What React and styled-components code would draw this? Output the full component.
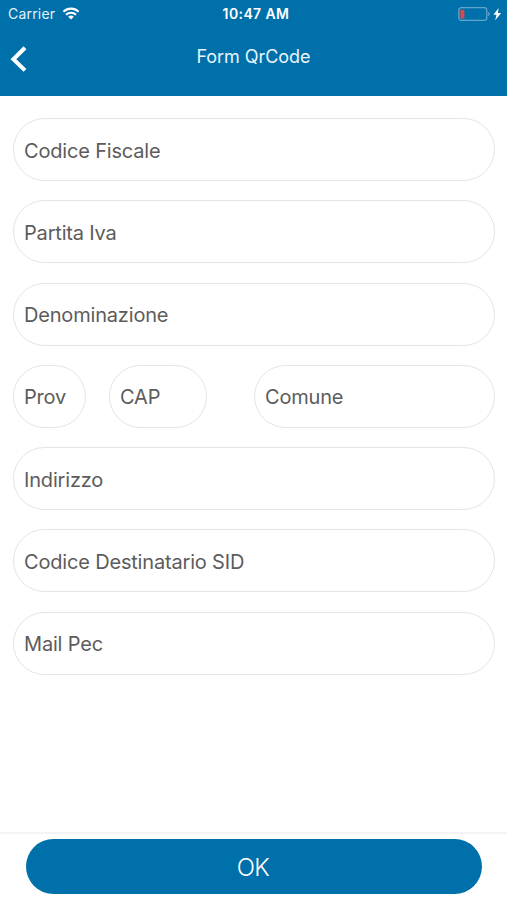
import React from "react";
import styled, { createGlobalStyle } from "styled-components";

const GlobalStyle = createGlobalStyle`
  * {
    box-sizing: border-box;
  }

  body {
    margin: 0;
    background-color: #ffffff;
    font-family: Inter, "Liberation Sans", sans-serif;
  }
`;

const Screen = styled.div`
  display: flex;
  flex-direction: column;
  width: 100%;
  height: 100vh;
  overflow: hidden;
`;

const Header = styled.header`
  height: 96px;
  flex: none;
  background-color: #0070ab;
  color: #ffffff;
`;

const StatusBar = styled.div`
  display: grid;
  grid-template-columns: 1fr auto 1fr;
  align-items: center;
  height: 27px;
  padding: 0 4px 0 8px;
  font-size: 14px;
  line-height: 27px;

  .carrier {
    display: flex;
    align-items: center;
    gap: 7px;
    color: #e4f2fa;
    letter-spacing: 0.2px;
  }

  .time {
    padding-left: 1px;
    font-size: 14px;
    font-weight: 600;
    letter-spacing: 0.4px;
  }

  .battery {
    display: flex;
    align-items: center;
    justify-content: flex-end;
  }
`;

const NavBar = styled.div`
  display: grid;
  grid-template-columns: 40px 1fr 40px;
  height: 64px;

  button {
    display: flex;
    align-items: center;
    padding: 0 0 0 10px;
    border: 0;
    background: none;
    color: inherit;
  }

  h1 {
    margin: 0;
    font-size: 18px;
    font-weight: 400;
    line-height: 59px;
    letter-spacing: -0.05px;
    text-align: center;
    color: #e9f5fb;
  }
`;

const Form = styled.form`
  display: flex;
  flex-direction: column;
  flex: 1;
  gap: 19.3px;
  padding: 22px 12px 0 13px;
`;

const FieldRow = styled.div`
  display: flex;

  > :nth-child(2) {
    margin-left: 23px;
  }

  > :nth-child(3) {
    margin-left: 47px;
  }
`;

const Field = styled.div`
  display: flex;
  align-items: center;
  flex: ${(props) => (props.$width ? "none" : "1")};
  width: ${(props) => (props.$width ? `${props.$width}px` : "auto")};
  height: 63px;
  padding: 2px 10px 0;
  border: 1px solid #e4e4e4;
  border-radius: 32px;
  font-size: 20px;
  letter-spacing: -0.18px;
  color: #5c5c5c;
  white-space: nowrap;
`;

const Footer = styled.footer`
  height: 68px;
  flex: none;
  padding: 5px 25px 0 26px;
  border-top: 2px solid #f5f4f5;
`;

const OkButton = styled.button`
  display: block;
  width: 100%;
  height: 55px;
  padding: 2px 2px 0 0;
  border: 0;
  border-radius: 28px;
  background-color: #0070ab;
  color: #ffffff;
  font-family: inherit;
  font-size: 24px;
  font-weight: 300;
  letter-spacing: -0.5px;
`;

const WifiIcon = () => (
  <svg width="18" height="13" viewBox="0 0 18 13" fill="none">
    <path d="M1.4 4.7a11 11 0 0 1 15.2 0" stroke="#fff" strokeWidth="2.1" />
    <path d="M4 7.7a7.2 7.2 0 0 1 10 0" stroke="#fff" strokeWidth="2" />
    <path d="M9 12.6 6.1 9.8a4.2 4.2 0 0 1 5.8 0Z" fill="#fff" />
  </svg>
);

const BatteryIcon = () => (
  <svg width="45" height="16" viewBox="0 0 45 16">
    <rect
      x="0.8"
      y="1.7"
      width="28"
      height="12.6"
      rx="2.6"
      fill="none"
      stroke="#61a6cd"
      strokeWidth="1.3"
    />
    <rect x="2.4" y="3.7" width="4" height="8.8" rx="1" fill="#df4648" />
    <path d="M30.2 5.8q1.6.6 1.6 2.2t-1.6 2.2Z" fill="#61a6cd" />
    <path d="m40.6 2-5.2 6.8h3.1l-1.3 5.4 6-7.1h-3.3Z" fill="#fff" />
  </svg>
);

const BackIcon = () => (
  <svg width="18" height="28" viewBox="0 0 18 28" fill="none">
    <path d="M15 2.8 3.4 14.2 15 25.4" stroke="#fff" strokeWidth="4" />
  </svg>
);

const fieldsBefore = ["Codice Fiscale", "Partita Iva", "Denominazione"];
const fieldsAfter = ["Indirizzo", "Codice Destinatario SID", "Mail Pec"];

const FullField = ({ label }) => (
  <FieldRow>
    <Field>{label}</Field>
  </FieldRow>
);

const App = () => {
  return (
    <>
      <GlobalStyle />
      <Screen>
        <Header>
          <StatusBar>
            <div className="carrier">
              <span>Carrier</span>
              <WifiIcon />
            </div>
            <span className="time">10:47 AM</span>
            <div className="battery">
              <BatteryIcon />
            </div>
          </StatusBar>
          <NavBar>
            <button type="button">
              <BackIcon />
            </button>
            <h1>Form QrCode</h1>
          </NavBar>
        </Header>
        <Form>
          {fieldsBefore.map((label) => (
            <FullField key={label} label={label} />
          ))}
          <FieldRow>
            <Field $width={73}>Prov</Field>
            <Field $width={98}>CAP</Field>
            <Field>Comune</Field>
          </FieldRow>
          {fieldsAfter.map((label) => (
            <FullField key={label} label={label} />
          ))}
        </Form>
        <Footer>
          <OkButton type="button">OK</OkButton>
        </Footer>
      </Screen>
    </>
  );
};

export default App;
